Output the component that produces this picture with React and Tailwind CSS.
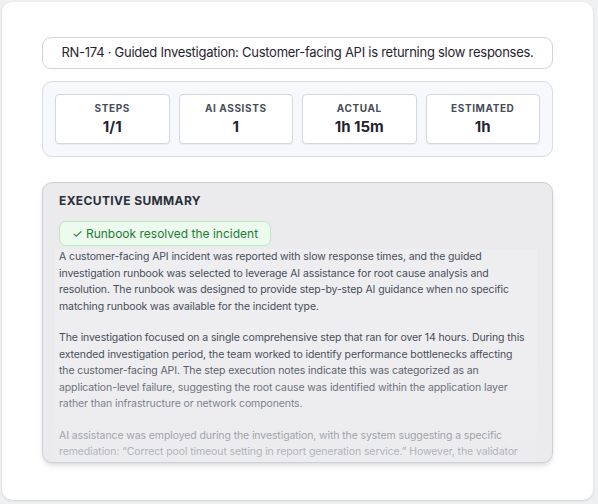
import React from "react";

const stats = [
  { label: "STEPS", value: "1/1" },
  { label: "AI ASSISTS", value: "1" },
  { label: "ACTUAL", value: "1h 15m" },
  { label: "ESTIMATED", value: "1h" },
];

// lines kept as in the summary render
const paragraphs = [
  [
    "A customer-facing API incident was reported with slow response times, and the guided",
    "investigation runbook was selected to leverage AI assistance for root cause analysis and",
    "resolution. The runbook was designed to provide step-by-step AI guidance when no specific",
    "matching runbook was available for the incident type.",
  ],
  [
    "The investigation focused on a single comprehensive step that ran for over 14 hours. During this",
    "extended investigation period, the team worked to identify performance bottlenecks affecting",
    "the customer-facing API. The step execution notes indicate this was categorized as an",
    "application-level failure, suggesting the root cause was identified within the application layer",
    "rather than infrastructure or network components.",
  ],
  [
    "AI assistance was employed during the investigation, with the system suggesting a specific",
    "remediation: \u201CCorrect pool timeout setting in report generation service.\u201D However, the validator",
    "system encountered technical difficulties due to insufficient API credits, resulting in a low",
    "confidence score for the suggested fix.",
  ],
];

export default function App() {
  return (
    <div
      className="w-[598px] h-[504px] bg-[#eff0f2] pt-[2px] pl-[2px] overflow-hidden"
      style={{ fontFamily: "Inter, 'Noto Sans', sans-serif" }}
    >
      <div className="w-[591px] h-[498px] bg-white rounded-[10px] shadow-sm px-[40px] pt-[35px]">
        {/* Title */}
        <div className="h-[32px] rounded-[9px] border border-[#cfd3da] flex items-center justify-center text-[13px] tracking-[-0.02em] text-[#1f2430] whitespace-nowrap">
          RN-174 · Guided Investigation: Customer-facing API is returning slow responses.
        </div>

        {/* Stats */}
        <div className="mt-[12px] h-[76px] rounded-[10px] border border-[#d8dde5] bg-[#f6f8fb] p-[12px] grid grid-cols-4 gap-[9px]">
          {stats.map((s) => (
            <div
              key={s.label}
              className="bg-white border border-[#d3d7de] rounded-[4px] shadow-[0_1px_1px_rgba(0,0,0,0.05)] flex flex-col items-center justify-center"
            >
              <div className="text-[10px] font-bold tracking-[0.06em] text-[#464c58] leading-[14px]">
                {s.label}
              </div>
              <div className="text-[15px] font-bold text-[#1f2430] leading-[20px] mt-[2px]">
                {s.value}
              </div>
            </div>
          ))}
        </div>

        {/* Executive summary */}
        <div className="mt-[25px] h-[281px] rounded-[10px] border border-[#cdd0d6] bg-[#ebebed] shadow-md pl-[16px] pt-[9px] relative overflow-hidden">
          <h3 className="text-[12px] font-bold tracking-[0.03em] text-[#2c303b] leading-[18px]">
            EXECUTIVE SUMMARY
          </h3>
          <div className="mt-[11px] flex items-center justify-center h-[25px] w-[212px] rounded-[7px] border border-[#b8ebbe] bg-[#edfaee] text-[12px] text-[#1f7a36] whitespace-nowrap">
            ✓ Runbook resolved the incident
          </div>
          <div className="mt-[3px] ml-[-4px] w-[482px] h-[300px] bg-[#eeeef0] pl-[4px]">
            {paragraphs.map((lines, i) => (
              <p key={i} className="text-[10.5px] tracking-[-0.01em] leading-[16.5px] text-[#474d59] mb-[15px] whitespace-nowrap">
                {lines.map((l, j) => (
                  <span key={j} className="block">{l}</span>
                ))}
              </p>
            ))}
          </div>
          <div className="absolute left-0 right-0 bottom-0 h-[110px] bg-gradient-to-b from-[#ebebed]/0 to-[#ebebed]/70 pointer-events-none" />
        </div>
      </div>
    </div>
  );
}
